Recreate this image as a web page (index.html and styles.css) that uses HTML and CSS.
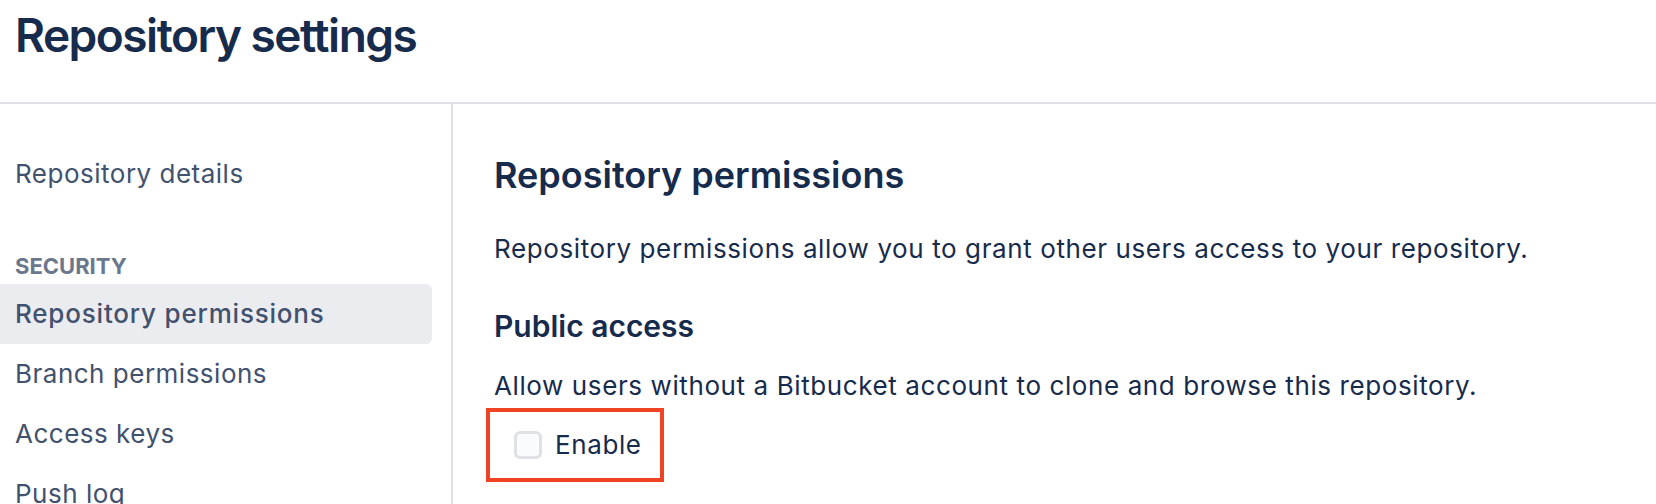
FILE: index.html
```html
<!DOCTYPE html>
<html lang="en">
<head>
    <meta charset="UTF-8">
    <title>Repository settings</title>
    <link rel="stylesheet" href="styles.css">
</head>
<body>
    <header class="page-header">
        <h1>Repository settings</h1>
    </header>

    <div class="layout">
        <aside class="sidebar">
            <ul class="nav">
                <li><a href="#">Repository details</a></li>
            </ul>
            <div class="nav-group">Security</div>
            <ul class="nav">
                <li class="active"><a href="#">Repository permissions</a></li>
                <li><a href="#">Branch permissions</a></li>
                <li><a href="#">Access keys</a></li>
                <li><a href="#">Push log</a></li>
            </ul>
        </aside>

        <main class="content">
            <h2>Repository permissions</h2>
            <p class="intro">Repository permissions allow you to grant other users access to your repository.</p>

            <h3>Public access</h3>
            <p class="desc">Allow users without a Bitbucket account to clone and browse this repository.</p>
            <label class="enable-box">
                <input type="checkbox">
                <span>Enable</span>
            </label>
        </main>
    </div>
</body>
</html>
```

FILE: styles.css
```css
body {
    font-family: 'Inter', 'Liberation Sans', sans-serif;
    margin: 0;
    padding: 0;
    background-color: #fff;
    color: #172b4d;
    overflow: hidden;
}

.page-header {
    height: 104px;
    box-sizing: border-box;
    padding: 7px 15px 0;
    border-bottom: 2px solid #dfe1e6;
}

.page-header h1 {
    margin: 0;
    font-size: 46px;
    line-height: 56px;
    font-weight: 600;
    letter-spacing: -1.5px;
    color: #172b4d;
}

.layout {
    display: flex;
}

.sidebar {
    width: 453px;
    box-sizing: border-box;
    padding: 40px 19px 0 0;
    border-right: 2px solid #dfe1e6;
    min-height: 420px;
}

.nav {
    list-style: none;
    margin: 0;
    padding: 0;
}

.nav li a {
    display: block;
    height: 60px;
    line-height: 60px;
    padding-left: 15px;
    font-size: 26px;
    letter-spacing: 0.5px;
    color: #42526e;
    text-decoration: none;
    border-radius: 0 6px 6px 0;
}

.nav li.active a {
    background-color: #ebecf0;
    font-weight: 500;
    letter-spacing: 0.8px;
}

.nav-group {
    margin: 50px 0 6px;
    padding-left: 15px;
    font-size: 22px;
    line-height: 24px;
    font-weight: 700;
    text-transform: uppercase;
    color: #6b778c;
}

.content {
    flex: 1;
    padding-left: 41px;
}

.content h2 {
    margin: 51px 0 0;
    font-size: 36px;
    line-height: 40px;
    font-weight: 600;
}

.content p {
    margin: 0;
    font-size: 26px;
    line-height: 32px;
    letter-spacing: 0.6px;
}

.intro {
    margin-top: 38px !important;
}

.content h3 {
    margin: 44px 0 0;
    font-size: 30px;
    line-height: 34px;
    font-weight: 600;
}

.desc {
    margin-top: 27px !important;
}

.enable-box {
    display: inline-flex;
    align-items: center;
    gap: 13px;
    margin: 6px 0 0 -8px;
    padding: 19px 18px 19px 24px;
    border: 4px solid #ee4423;
    font-size: 26px;
    line-height: 28px;
    letter-spacing: 0.6px;
}

.enable-box input {
    appearance: none;
    margin: 0;
    width: 28px;
    height: 28px;
    box-sizing: border-box;
    border: 3px solid #dfe1e6;
    border-radius: 6px;
    background-color: #fafbfc;
}
```
